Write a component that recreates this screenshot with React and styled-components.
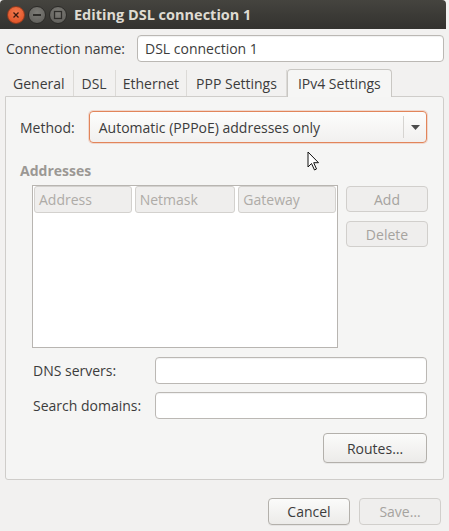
import React from 'react';
import styled, { createGlobalStyle } from 'styled-components';

const GlobalStyle = createGlobalStyle`
  html, body { margin: 0; padding: 0; background: #f2f1f0; }
  body { font-family: "Open Sans", "DejaVu Sans", sans-serif; font-size: 14px; color: #3c3c3c; }
  * { box-sizing: border-box; }
`;

const Window = styled.div`
  width: 449px;
  height: 531px;
  background: #f2f1f0;
  display: flex;
  flex-direction: column;
  overflow: hidden;
  position: relative;
`;

const TitleBar = styled.div`
  height: 29px;
  background: linear-gradient(180deg, #45443f 0%, #3a3935 60%, #33322f 100%);
  display: flex;
  align-items: center;
  padding-left: 7px;
  margin-right: 3px;
  border-radius: 4px 4px 0 0;
`;

const WinBtn = styled.div`
  width: 18px;
  height: 18px;
  border-radius: 50%;
  margin-right: 3px;
  display: flex;
  align-items: center;
  justify-content: center;
  background: ${({ close }) =>
    close ? 'radial-gradient(circle at 50% 35%, #f27a4e, #dd4b1f)' : 'radial-gradient(circle at 50% 35%, #7d7c77, #5c5b57)'};
  border: 1px solid ${({ close }) => (close ? '#8f3a1e' : '#2c2b28')};
`;

const Title = styled.div`
  margin-left: 4px;
  color: #dfdbd2;
  font-weight: 700;
  font-size: 14.5px;
`;

const Body = styled.div`
  flex: 1;
  display: flex;
  flex-direction: column;
  padding: 6px 5px 0 5px;
`;

const NameRow = styled.div`
  display: flex;
  align-items: center;
  height: 27px;
  padding-left: 1px;
  gap: 12px;
`;

const Label = styled.span`
  color: #3c3c3c;
  white-space: nowrap;
  width: ${({ w }) => (w ? `${w}px` : 'auto')};
  flex-shrink: 0;
`;

const Entry = styled.div`
  flex: 1;
  height: ${({ h }) => h || 27}px;
  background: #fff;
  border: 1px solid #bbb8b4;
  border-radius: 4px;
  display: flex;
  align-items: center;
  padding-left: 7px;
  color: #3c3c3c;
  box-shadow: inset 0 1px 1px rgba(0,0,0,0.06);
`;

const Tabs = styled.div`
  display: flex;
  margin-top: 7px;
  height: 27px;
  align-items: flex-end;
`;

const Tab = styled.div`
  height: ${({ active }) => (active ? 28 : 26)}px;
  padding: 0 ${({ px }) => px}px;
  display: flex;
  align-items: center;
  white-space: nowrap;
  color: #3c3c3c;
  border-right: 1px solid ${({ active }) => (active ? '#c9c7c3' : '#dcdad7')};
  background: ${({ active }) => (active ? '#f6f6f5' : 'transparent')};
  ${({ active }) =>
    active &&
    `
    border: 1px solid #c9c7c3;
    border-bottom: none;
    border-radius: 4px 4px 0 0;
    margin-bottom: -1px;
    position: relative;
    z-index: 1;
  `}
`;

const Panel = styled.div`
  height: 384px;
  border: 1px solid #cfcdca;
  border-radius: 0 3px 3px 3px;
  background: #f5f5f4;
  padding: 14px 16px 0 14px;
  display: flex;
  flex-direction: column;
`;

const MethodRow = styled.div`
  display: flex;
  align-items: center;
  gap: 14px;
`;

const Combo = styled.div`
  flex: 1;
  height: 32px;
  border: 1px solid #e2855a;
  border-radius: 4px;
  background: linear-gradient(180deg, #fdfdfc 0%, #f1f0ef 100%);
  display: flex;
  align-items: center;
  padding-left: 9px;
  box-shadow: 0 0 0 1px rgba(226,133,90,0.25);
`;

const ComboText = styled.span`
  flex: 1;
  color: #3c3c3c;
`;

const ComboArrow = styled.div`
  width: 23px;
  height: 22px;
  border-left: 1px solid #d6d4d1;
  display: flex;
  align-items: center;
  justify-content: center;
`;

const SectionTitle = styled.div`
  margin-top: 18px;
  font-weight: 700;
  color: #9b9894;
`;

const AddrRow = styled.div`
  display: flex;
  margin-top: 5px;
  padding-left: 12px;
  gap: 8px;
`;

const Table = styled.div`
  width: 306px;
  height: 163px;
  background: #fff;
  border: 1px solid #b8b5b1;
  display: flex;
  align-items: flex-start;
  gap: 3px;
  padding: 0 1px;
`;

const Header = styled.div`
  width: ${({ w }) => w}px;
  height: 27px;
  border: 1px solid #d3d1ce;
  border-radius: 3px;
  background: #efeeed;
  color: #aeaba7;
  display: flex;
  align-items: center;
  padding-left: 4px;
`;

const SideButtons = styled.div`
  display: flex;
  flex-direction: column;
  gap: 9px;
  padding-top: 1px;
`;

const Button = styled.div`
  width: ${({ w }) => w}px;
  height: ${({ h }) => h || 27}px;
  border: 1px solid ${({ disabled }) => (disabled ? '#d1cfcc' : '#b3b0ab')};
  border-radius: 4px;
  background: ${({ disabled }) =>
    disabled ? '#efeeed' : 'linear-gradient(180deg, #fbfbfa 0%, #ecebe9 100%)'};
  color: ${({ disabled }) => (disabled ? '#a6a39f' : '#3c3c3c')};
  display: flex;
  align-items: center;
  justify-content: center;
  box-shadow: ${({ disabled }) => (disabled ? 'none' : '0 1px 0 rgba(0,0,0,0.05)')};
`;

const FieldRow = styled.div`
  display: flex;
  align-items: center;
  padding-left: 13px;
  margin-top: ${({ mt }) => mt}px;
`;

const RightRow = styled.div`
  display: flex;
  justify-content: flex-end;
  margin-top: ${({ mt }) => mt}px;
  gap: 9px;
`;

const Footer = styled.div`
  display: flex;
  justify-content: flex-end;
  gap: 9px;
  margin-top: 18px;
  padding-right: 3px;
`;

const Cursor = styled.svg`
  position: absolute;
  left: 307px;
  top: 151px;
`;

export default function App() {
  return (
    <Window>
      <GlobalStyle />
      <TitleBar>
        <WinBtn close>
          <svg width="8" height="8" viewBox="0 0 8 8">
            <path d="M1.5 1.5 L6.5 6.5 M6.5 1.5 L1.5 6.5" stroke="#3a1a10" strokeWidth="1.3" />
          </svg>
        </WinBtn>
        <WinBtn>
          <svg width="10" height="4" viewBox="0 0 10 4">
            <rect x="1" y="1" width="8" height="2" fill="#2e2d2a" />
          </svg>
        </WinBtn>
        <WinBtn>
          <svg width="10" height="10" viewBox="0 0 10 10">
            <rect x="1.5" y="1.5" width="7" height="7" fill="none" stroke="#2e2d2a" strokeWidth="1.3" />
          </svg>
        </WinBtn>
        <Title>Editing DSL connection 1</Title>
      </TitleBar>
      <Body>
        <NameRow>
          <Label>Connection name:</Label>
          <Entry>DSL connection 1</Entry>
        </NameRow>
        <Tabs>
          <Tab px={8}>General</Tab>
          <Tab px={8}>DSL</Tab>
          <Tab px={7}>Ethernet</Tab>
          <Tab px={9}>PPP Settings</Tab>
          <Tab px={10} active>IPv4 Settings</Tab>
        </Tabs>
        <Panel>
          <MethodRow>
            <Label>Method:</Label>
            <Combo>
              <ComboText>Automatic (PPPoE) addresses only</ComboText>
              <ComboArrow>
                <svg width="9" height="5" viewBox="0 0 9 5">
                  <path d="M0 0 L9 0 L4.5 5 Z" fill="#4c4c4c" />
                </svg>
              </ComboArrow>
            </Combo>
          </MethodRow>
          <SectionTitle>Addresses</SectionTitle>
          <AddrRow>
            <Table>
              <Header w={98}>Address</Header>
              <Header w={101}>Netmask</Header>
              <Header w={98}>Gateway</Header>
            </Table>
            <SideButtons>
              <Button w={82} h={26} disabled>Add</Button>
              <Button w={82} h={26} disabled>Delete</Button>
            </SideButtons>
          </AddrRow>
          <FieldRow mt={9}>
            <Label w={122}>DNS servers:</Label>
            <Entry />
          </FieldRow>
          <FieldRow mt={8}>
            <Label w={122}>Search domains:</Label>
            <Entry />
          </FieldRow>
          <RightRow mt={14}>
            <Button w={104} h={30}>Routes…</Button>
          </RightRow>
        </Panel>
        <Footer>
          <Button w={82}>Cancel</Button>
          <Button w={82} disabled>Save…</Button>
        </Footer>
      </Body>
      <Cursor width="14" height="22" viewBox="0 0 14 22">
        <path d="M1 1 L1 16 L4.5 12.5 L7.5 19 L9.5 18 L6.7 11.7 L11.5 11.7 Z" fill="#fff" stroke="#111" strokeWidth="1" strokeLinejoin="round" />
      </Cursor>
    </Window>
  );
}
